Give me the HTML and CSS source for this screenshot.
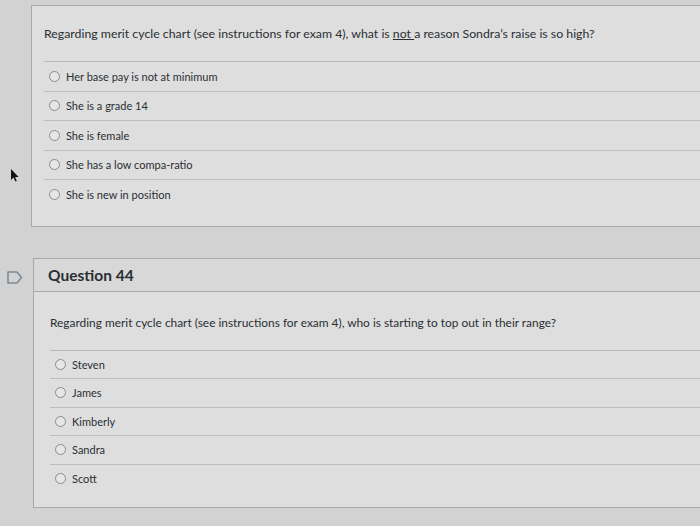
FILE: index.html
```html
<!DOCTYPE html>
<html>
<head>
<meta charset="utf-8">
<link rel="stylesheet" href="styles.css">
</head>
<body>
<div class="page">
  <div class="gutter">
    <div class="cursor">
      <svg width="8" height="13" viewBox="0 0 8 13"><path d="M0 0 L0 11 L2.6 8.4 L4.4 12.6 L5.8 12 L4.1 7.9 L7.6 7.9 Z" fill="#111"/></svg>
    </div>
    <div class="flag">
      <svg width="16" height="13" viewBox="0 0 16 13"><path d="M1 1 H10 L14.5 6.5 L10 12 H1 Z" fill="none" stroke="#7f8a98" stroke-width="1.6" stroke-linejoin="round"/></svg>
    </div>
  </div>
  <div class="content">
    <section class="card card-one">
      <p class="qtext">Regarding merit cycle chart (see instructions for exam 4), what is <u>not </u>a reason Sondra’s raise is so high?</p>
      <ul class="answers">
        <li><span class="radio"></span>Her base pay is not at minimum</li>
        <li><span class="radio"></span>She is a grade 14</li>
        <li><span class="radio"></span>She is female</li>
        <li><span class="radio"></span>She has a low compa-ratio</li>
        <li><span class="radio"></span>She is new in position</li>
      </ul>
    </section>
    <section class="card card-two">
      <header class="qhead">Question 44</header>
      <div class="qbody">
        <p class="qtext">Regarding merit cycle chart (see instructions for exam 4), who is starting to top out in their range?</p>
        <ul class="answers">
          <li><span class="radio"></span>Steven</li>
          <li><span class="radio"></span>James</li>
          <li><span class="radio"></span>Kimberly</li>
          <li><span class="radio"></span>Sandra</li>
          <li><span class="radio"></span>Scott</li>
        </ul>
      </div>
    </section>
  </div>
</div>
</body>
</html>
```

FILE: styles.css
```css
html, body {
  margin: 0;
  padding: 0;
}
body {
  background: #d2d2d2;
  font-family: Lato, "Open Sans", sans-serif;
  color: #2a2f33;
  width: 700px;
  height: 526px;
  overflow: hidden;
}
.page {
  position: relative;
  display: flex;
  height: 526px;
}
.gutter {
  width: 31px;
  flex: none;
  position: relative;
}
.cursor {
  position: absolute;
  left: 11px;
  top: 166px;
}
.flag {
  position: absolute;
  left: 7px;
  top: 268px;
}
.content {
  flex: 1;
  padding-top: 5px;
  margin-right: -20px;
}
.card {
  background: #dedede;
  border: 1px solid #a9a9a9;
}
.card-one {
  padding: 0 0 17px 12px;
}
.card-one .qtext {
  margin: 0;
  padding: 19px 0 19px 0;
  font-size: 12.3px;
  line-height: 17px;
  border-bottom: 1px solid #b9b9b9;
}
.answers {
  list-style: none;
  margin: 0;
  padding: 0;
}
.answers li {
  display: flex;
  align-items: center;
  font-size: 11px;
  height: 28.5px;
  padding-left: 5px;
  border-top: 1px solid #bdbdbd;
}
.answers li:first-child {
  border-top: none;
}
.radio {
  width: 9px;
  height: 9px;
  border: 1px solid #8c8c8c;
  border-radius: 50%;
  background: #e6e6e6;
  margin-right: 6px;
  flex: none;
}
.card-two {
  margin-top: 31px;
  margin-left: 2px;
}
.qhead {
  background: #d8d8d8;
  height: 32px;
  display: flex;
  align-items: center;
  padding-left: 14px;
  font-size: 15.5px;
  font-weight: bold;
  border-bottom: 1px solid #a9a9a9;
}
.qbody {
  padding: 0 0 15px 16px;
}
.card-two .qtext {
  margin: 0;
  padding: 22px 0 19px 0;
  font-size: 11.9px;
  line-height: 17px;
  border-bottom: 1px solid #b9b9b9;
}
.card-two .answers li {
  height: 27.5px;
  padding-left: 5px;
}
```
